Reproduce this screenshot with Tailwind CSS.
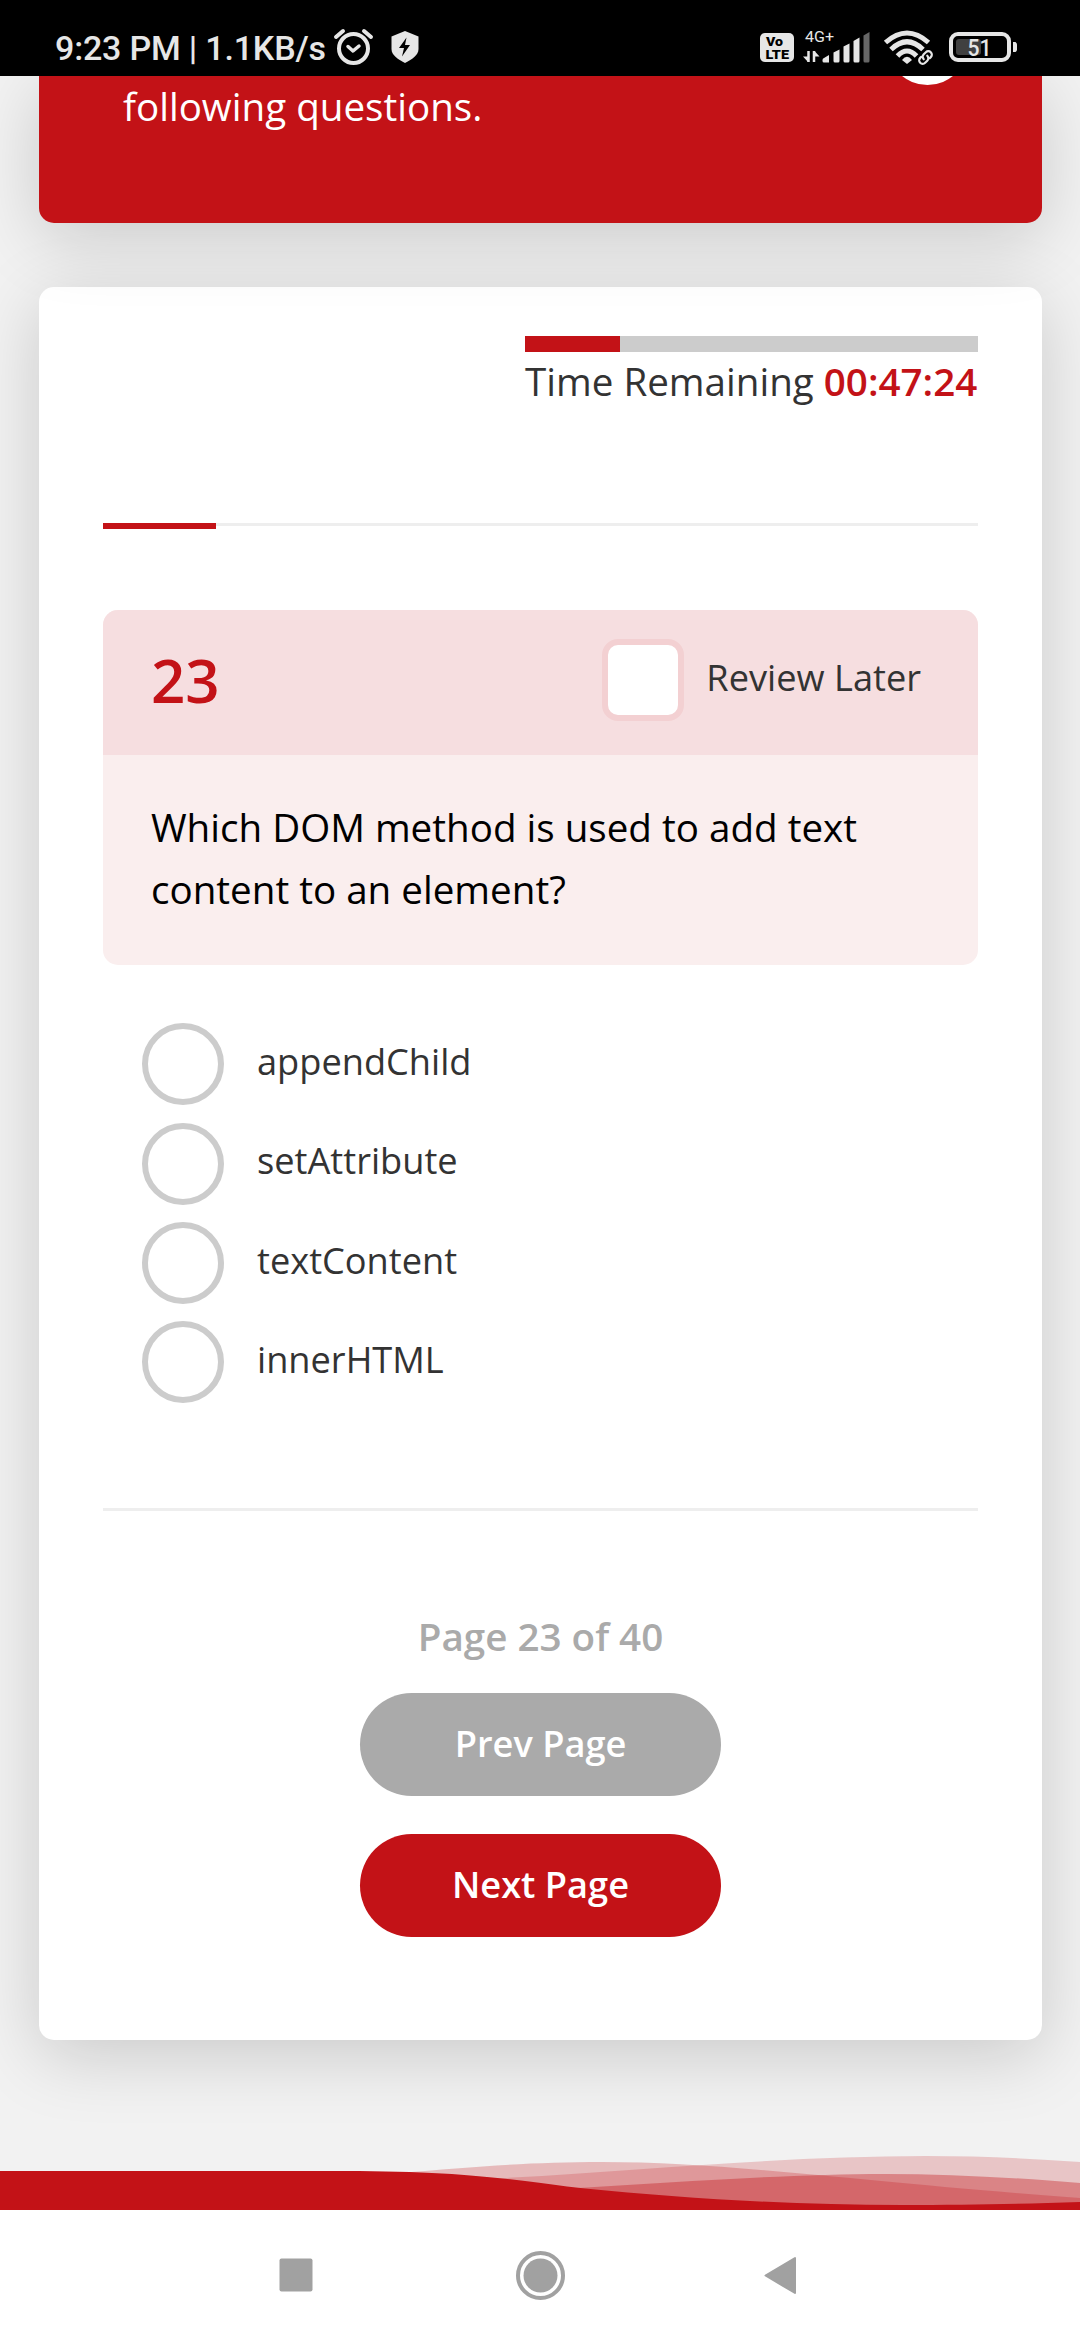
<!DOCTYPE html>
<html lang="en">
<head>
<meta charset="utf-8">
<title>Quiz</title>
<script src="https://cdn.jsdelivr.net/npm/@tailwindcss/browser@4"></script>
</head>
<body class="w-[1080px] h-[2340px] overflow-hidden bg-[#f2f2f2] font-['Open_Sans',sans-serif] text-[#333] flex flex-col">
  <!-- Status bar -->
  <header class="relative z-20 h-[76px] shrink-0 bg-black text-[#e6e6e6]">
    <svg class="block" width="1080" height="76" viewBox="0 0 1080 76" fill="none" font-family="Roboto, sans-serif">
      <text x="55" y="60" font-size="34" font-weight="500" fill="#e6e6e6" textLength="271" lengthAdjust="spacing">9:23 PM | 1.1KB/s</text>
      <!-- alarm -->
      <g stroke="#e6e6e6" stroke-linecap="round" stroke-linejoin="round">
        <circle cx="353.500" cy="48.500" r="14.500" stroke-width="4"/>
        <path d="M348 46.500l5 4.500 6-5" stroke-width="3.500"/>
        <path d="M336 37l7-6M371 37l-7-6" stroke-width="4"/>
      </g>
      <!-- shield -->
      <path d="M405 31l13.500 5.500V49c0 6-6 10-13.500 14-7.500-4-13.500-8-13.500-14V36.500z" fill="#e6e6e6"/>
      <path d="M406.500 37.500l-7.500 10.500h5l-2 8.500 8-11.500h-5z" fill="#000"/>
      <!-- VoLTE -->
      <rect x="760" y="33" width="34" height="29" rx="5" fill="#e6e6e6"/>
      <text x="766" y="46" font-size="13" font-weight="900" fill="#000" textLength="17" lengthAdjust="spacingAndGlyphs">Vo</text>
      <text x="765.500" y="59" font-size="13.500" font-weight="900" fill="#000" textLength="23.500" lengthAdjust="spacingAndGlyphs">LTE</text>
      <!-- mobile signal -->
      <text x="805" y="41.500" font-size="15.500" fill="#e6e6e6" textLength="29" lengthAdjust="spacingAndGlyphs">4G+</text>
      <path d="M808.500 51v11M814 62V51" stroke="#e6e6e6" stroke-width="2.500"/>
      <path d="M803 56.500h5V62zM814.500 51v5.500h5z" fill="#e6e6e6"/>
      <g fill="#e6e6e6">
        <path d="M822.500 60q0-1.500 1.500-2l5-3v7.500h-5q-1.500 0-1.500-1.500z"/>
        <path d="M833.500 52.500l6-3V61q0 1.500-1.500 1.500h-3q-1.500 0-1.500-1.500z"/>
        <path d="M843.500 46.500l6-3V61q0 1.500-1.500 1.500h-3q-1.500 0-1.500-1.500z"/>
        <path d="M853.500 41l6-3.500V61q0 1.500-1.500 1.500h-3q-1.500 0-1.500-1.500z"/>
        <path d="M863.500 35.500l6-3.500V61q0 1.500-1.500 1.500h-3q-1.500 0-1.500-1.500z" fill="#666"/>
      </g>
      <!-- wifi -->
      <g stroke="#e6e6e6" stroke-width="5">
        <path d="M885.500 42.500Q907 23.500 928.500 42.500"/>
        <path d="M891 49.500Q907 34 923 49.500"/>
        <path d="M897.500 56Q907 46 916.500 56"/>
      </g>
      <path d="M902 60q5-6.500 10 0l-5 4z" fill="#e6e6e6"/>
      <g transform="rotate(-45 925.500 57.500)">
        <rect x="915.500" y="52" width="20" height="11" rx="5" fill="#000"/>
        <path d="M923 54h-1.500a3.500 3.500 0 0 0 0 7h3a3.500 3.500 0 0 0 3.500-3.500M928 61h1.500a3.500 3.500 0 0 0 0-7h-3a3.500 3.500 0 0 0-3.500 3.500" stroke="#e6e6e6" stroke-width="2.200" stroke-linecap="round"/>
      </g>
      <!-- battery -->
      <rect x="951" y="34" width="58" height="26" rx="7" stroke="#e6e6e6" stroke-width="4"/>
      <rect x="956" y="39" width="25" height="16" rx="3" fill="#404040"/>
      <path d="M1013 42h2.500q1.500 1 1.500 2.500v5q0 1.500-1.500 2.500H1013z" fill="#e6e6e6"/>
      <text x="967.500" y="56" font-size="23" font-weight="500" fill="#e6e6e6" textLength="24" lengthAdjust="spacingAndGlyphs">51</text>
    </svg>
  </header>

  <main class="relative h-[2134px] shrink-0 overflow-hidden flex flex-col px-[39px]">
    <!-- Instructions card, scrolled under the status bar -->
    <section class="relative z-10 w-[1003px] h-[147px] shrink-0 rounded-b-[15px] bg-[#c31217] pt-px pl-[84px] shadow-[0_15px_70px_rgba(0,0,0,0.17)]">
      <p class="text-[38.6px] leading-[58px] text-white">following questions.</p>
      <div class="absolute left-[848px] -top-[72px] size-[81px] rounded-full bg-white"></div>
    </section>

    <!-- Question card -->
    <section class="mt-16 w-[1003px] h-[1753px] shrink-0 rounded-[15px] bg-white px-16 pt-[49px] flex flex-col shadow-[0_15px_70px_rgba(0,0,0,0.17)]">
      <div class="self-end w-[453px]">
        <div class="h-4 bg-[#ccc]"><div class="h-4 w-[95px] bg-[#c31217]"></div></div>
        <p class="text-[38.6px] leading-[58px] whitespace-nowrap">Time Remaining <span class="font-semibold text-[#c31217]">00:47:24</span></p>
      </div>

      <div class="mt-[113px] h-1.5 w-[875px]">
        <div class="h-[3px] bg-[#eee]"><div class="h-1.5 w-[113px] bg-[#c31217]"></div></div>
      </div>

      <article class="mt-[81px] w-[875px] h-[355px] rounded-[15px] overflow-hidden bg-[#faeeee]">
        <div class="h-[145px] bg-[#f6dee0] pl-12 pb-[5px] flex items-center">
          <span class="text-[60px] leading-none font-semibold text-[#c31217]">23</span>
          <span class="ml-auto size-[82px] rounded-[16px] border-6 border-[#f3d0d2] bg-white"></span>
          <span class="ml-[22px] mr-[57px] pb-1.5 text-[36.2px] leading-[54px]">Review Later</span>
        </div>
        <p class="pt-[41px] pl-12 text-[38.6px] leading-[62px] text-black">Which DOM method is used to add text<br>content to an element?</p>
      </article>

      <ul class="mt-[58px] pl-[39px] text-[36.2px] leading-[54px]">
        <li class="flex items-center h-[82px] mb-[18px]"><span class="size-[82px] rounded-full border-6 border-[#ccc]"></span><span class="ml-[33px] pb-1.5">appendChild</span></li>
        <li class="flex items-center h-[82px] mb-[17px]"><span class="size-[82px] rounded-full border-6 border-[#ccc]"></span><span class="ml-[33px] pb-2">setAttribute</span></li>
        <li class="flex items-center h-[82px] mb-[17px]"><span class="size-[82px] rounded-full border-6 border-[#ccc]"></span><span class="ml-[33px] pb-1.5">textContent</span></li>
        <li class="flex items-center h-[82px]"><span class="size-[82px] rounded-full border-6 border-[#ccc]"></span><span class="ml-[33px] pb-1.5">innerHTML</span></li>
      </ul>

      <div class="mt-[105px] h-[3px] w-[875px] bg-[#eee]"></div>

      <div class="mt-24 flex flex-col items-center font-semibold">
        <p class="text-[38.6px] leading-[58px] text-[#aaa]">Page 23 of 40</p>
        <button class="mt-7 w-[361px] h-[103px] rounded-full bg-[#aaa] pb-[3px] text-[36.2px] text-white">Prev Page</button>
        <button class="mt-[38px] w-[361px] h-[103px] rounded-full bg-[#c31217] pb-[3px] text-[36.2px] text-white">Next Page</button>
      </div>
    </section>

    <!-- Footer waves -->
    <svg class="absolute left-0 bottom-0" width="1080" height="60" viewBox="0 2150 1080 60" fill="#c31217">
      <path fill-opacity=".25" d="M400 2173C470 2167 530 2162 602 2162C730 2162 860 2182 1080 2198V2210H400z"/>
      <path fill-opacity=".2" d="M470 2180C640 2171 780 2156 926 2156C980 2156 1030 2158.500 1080 2162V2210H470z"/>
      <path fill-opacity=".36" d="M570 2188.500C680 2182 790 2174 885 2174C950 2174 1020 2178 1080 2183V2210H570z"/>
      <path d="M0 2171H345C480 2171 530 2183 585 2188.500C680 2198 790 2205 902 2205C965 2205 1020 2204 1080 2202V2210H0z"/>
    </svg>
  </main>

  <!-- System navigation -->
  <nav class="h-[130px] shrink-0 bg-white">
    <svg class="block" width="1080" height="130" viewBox="0 2210 1080 130" fill="#a1a1a1">
      <rect x="279.500" y="2258.500" width="33" height="33" rx="2"/>
      <circle cx="540.500" cy="2275.500" r="22.500" fill="none" stroke="#a1a1a1" stroke-width="4"/>
      <circle cx="540.500" cy="2275.500" r="17"/>
      <path d="M765.500 2275.500L795 2258V2293z" stroke="#a1a1a1" stroke-width="2" stroke-linejoin="round"/>
    </svg>
  </nav>
</body>
</html>
